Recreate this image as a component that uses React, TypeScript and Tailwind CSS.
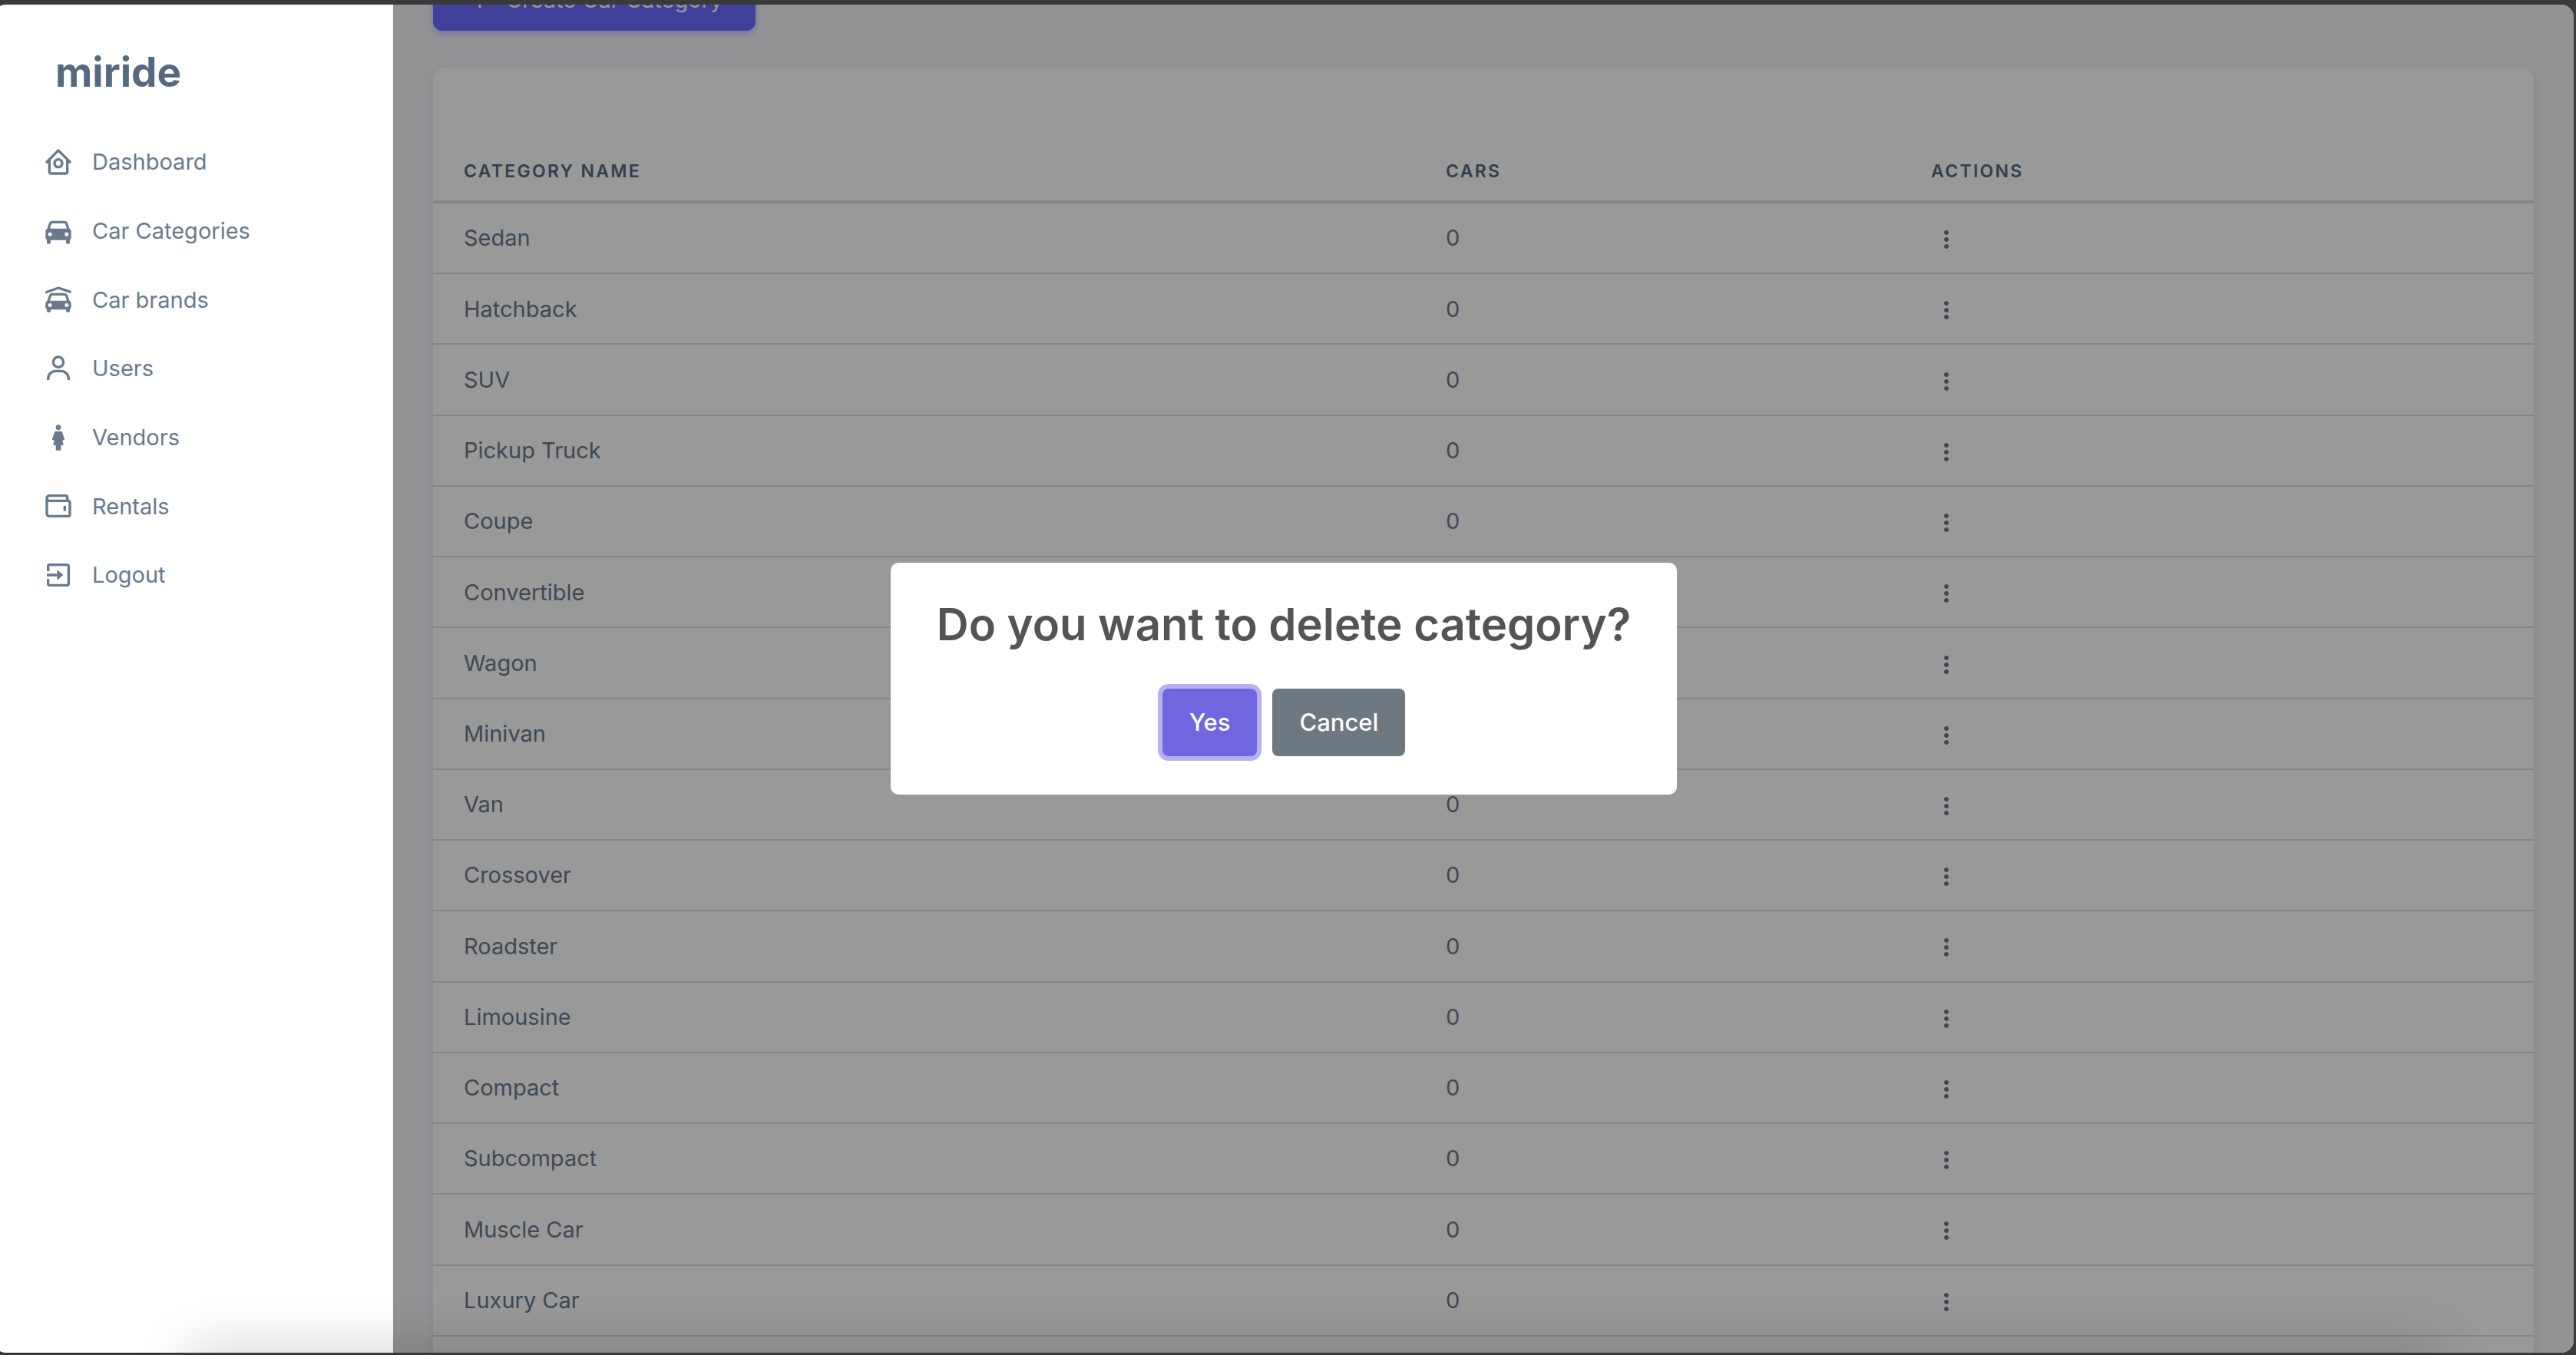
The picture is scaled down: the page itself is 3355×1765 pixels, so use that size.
import type { IconType } from "react-icons";
import {
  BiDotsVerticalRounded,
  BiExit,
  BiFemale,
  BiHomeCircle,
  BiPlus,
  BiSolidCar,
  BiSolidCarGarage,
  BiUser,
  BiWallet,
} from "react-icons/bi";

const menu: { label: string; icon: IconType }[] = [
  { label: "Dashboard", icon: BiHomeCircle },
  { label: "Car Categories", icon: BiSolidCar },
  { label: "Car brands", icon: BiSolidCarGarage },
  { label: "Users", icon: BiUser },
  { label: "Vendors", icon: BiFemale },
  { label: "Rentals", icon: BiWallet },
  { label: "Logout", icon: BiExit },
];

const categories = [
  "Sedan",
  "Hatchback",
  "SUV",
  "Pickup Truck",
  "Coupe",
  "Convertible",
  "Wagon",
  "Minivan",
  "Van",
  "Crossover",
  "Roadster",
  "Limousine",
  "Compact",
  "Subcompact",
  "Muscle Car",
  "Luxury Car",
];

function Sidebar() {
  return (
    <aside className="relative z-20 flex w-[520px] shrink-0 flex-col bg-white">
      <a href="#" className="mt-12 pl-20 text-[53px] leading-[80px] font-bold text-[#566a7f]">
        miride
      </a>
      <nav className="mt-8 flex h-[628px] flex-col">
        {menu.map(({ label, icon: Icon }) => (
          <a
            key={label}
            href="#"
            className="flex flex-1 items-center gap-6 pl-16 text-[29px] text-[#697a8d]"
          >
            <Icon className="size-10" aria-hidden />
            {label}
          </a>
        ))}
      </nav>
    </aside>
  );
}

function CategoryTable() {
  return (
    <section className="mt-12 min-h-[1800px] rounded-2xl bg-white pt-24 shadow-[0_4px_12px_rgba(67,89,113,0.12)]">
      <table className="h-[1649px] w-full table-fixed border-separate border-spacing-0 text-left">
        <thead>
          <tr className="h-[81px] text-[23px] tracking-widest text-[#566a7f] uppercase *:border-b-4 *:border-[#d9dee3] *:px-10 *:pt-0.5 *:font-semibold">
            <th className="w-[46.75%]">Category Name</th>
            <th className="w-[23.1%]">Cars</th>
            <th>Actions</th>
          </tr>
        </thead>
        <tbody>
          {[...categories, ""].map((name) => (
            <tr
              key={name}
              className="h-[92px] text-[29px] text-[#697a8d] *:border-b-2 *:border-[#d9dee3] *:px-10"
            >
              <td>{name}</td>
              <td>{name && "0"}</td>
              <td>
                {name && (
                  <button
                    type="button"
                    aria-label={`Actions for ${name}`}
                    className="block px-0.5 pt-1"
                  >
                    <BiDotsVerticalRounded className="size-9" />
                  </button>
                )}
              </td>
            </tr>
          ))}
        </tbody>
      </table>
    </section>
  );
}

function DeleteDialog() {
  return (
    <div className="absolute inset-0 z-30 flex items-center justify-center">
      <div
        role="dialog"
        aria-modal="true"
        aria-labelledby="dialog-title"
        className="flex w-[1024px] flex-col items-center rounded-[10px] bg-white pt-11 pb-[50px]"
      >
        <h2
          id="dialog-title"
          className="text-[58px] leading-[72px] font-semibold whitespace-nowrap text-[#545454]"
        >
          Do you want to delete category?
        </h2>
        <div className="mt-12 flex gap-5 text-[31px] font-medium text-white">
          <button
            type="button"
            className="h-[88px] rounded-lg bg-[#7066e0] px-[35px] ring-6 ring-[#7066e0]/50"
          >
            Yes
          </button>
          <button type="button" className="h-[88px] rounded-lg bg-[#6e7881] px-[35px]">
            Cancel
          </button>
        </div>
      </div>
    </div>
  );
}

export default function App() {
  return (
    <div className="h-screen overflow-hidden bg-[#3a3a3a] pt-1.5 pr-[3px] pb-[3px] font-['Inter',sans-serif]">
      <div className="relative -ml-2 flex h-full overflow-hidden rounded-2xl bg-[#f5f5f9]">
        <Sidebar />
        <main className="min-w-0 flex-1 px-[52px]">
          <button
            type="button"
            className="-mt-[46px] flex h-20 items-center gap-4 rounded-xl bg-[#696cff] px-[43px] text-[29px] text-white shadow-[0_4px_8px_rgba(105,108,255,0.4)]"
          >
            <BiPlus className="size-9" aria-hidden />
            Create Car Category
          </button>
          <CategoryTable />
        </main>
        <div className="absolute inset-0 z-10 bg-black/40" />
        <DeleteDialog />
        <div className="pointer-events-none absolute top-full right-44 left-64 z-40 h-20 shadow-[0_0_80px_rgba(0,0,0,0.2)]" />
      </div>
    </div>
  );
}
